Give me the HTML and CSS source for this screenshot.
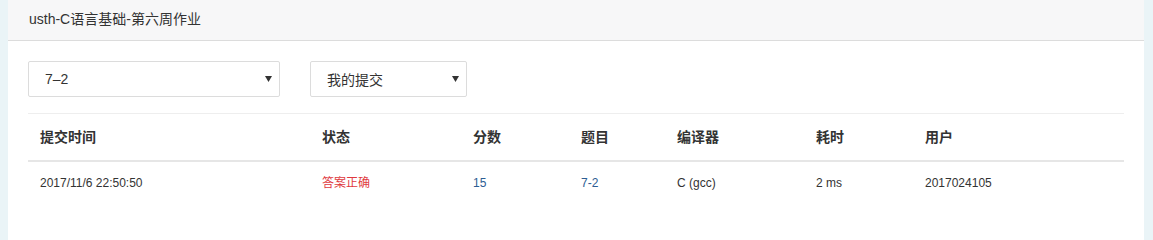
FILE: index.html
```html
<!DOCTYPE html>
<html lang="zh-CN">
<head>
<meta charset="utf-8">
<title>usth-C语言基础-第六周作业</title>
<link rel="stylesheet" href="styles.css">
</head>
<body>
<div class="card">
  <div class="card-header">usth-C语言基础-第六周作业</div>
  <div class="card-body">
    <div class="filters">
      <div class="select select-problem">
        <span class="select-text">7–2</span>
        <svg class="caret" width="7" height="6" viewBox="0 0 7 6"><path d="M0 0H7L3.5 6Z" fill="#333"/></svg>
      </div>
      <div class="select select-scope">
        <span class="select-text">我的提交</span>
        <svg class="caret" width="7" height="6" viewBox="0 0 7 6"><path d="M0 0H7L3.5 6Z" fill="#333"/></svg>
      </div>
    </div>
    <table class="table">
      <colgroup>
        <col class="c1"><col class="c2"><col class="c3"><col class="c4"><col class="c5"><col class="c6"><col>
      </colgroup>
      <thead>
        <tr><th>提交时间</th><th>状态</th><th>分数</th><th>题目</th><th>编译器</th><th>耗时</th><th>用户</th></tr>
      </thead>
      <tbody>
        <tr>
          <td>2017/11/6 22:50:50</td>
          <td class="status-ok">答案正确</td>
          <td class="link">15</td>
          <td class="link">7-2</td>
          <td>C (gcc)</td>
          <td>2 ms</td>
          <td>2017024105</td>
        </tr>
      </tbody>
    </table>
  </div>
</div>
</body>
</html>
```

FILE: styles.css
```css
html {
  margin: 0;
  padding: 0;
  height: 100%;
  background: #eaf4f7;
}
body {
  margin: 0;
  background: #eaf4f7;
  padding: 0 9px 0 8px;
  font-family: "Liberation Sans", "Noto Sans CJK SC", sans-serif;
  color: #333;
  min-height: 100vh;
  box-sizing: border-box;
  display: flex;
  flex-direction: column;
}
.card {
  background: #fff;
  flex: 1 0 auto;
  min-height: 100vh;
}
.card-header {
  background: #f7f7f8;
  border-bottom: 1px solid #dcdcdc;
  height: 40px;
  line-height: 38px;
  padding-left: 21px;
  font-size: 14px;
  color: #333;
}
.card-body {
  padding: 20px 20px 0 20px;
}
.filters {
  display: flex;
  gap: 30px;
}
.select {
  height: 36px;
  box-sizing: border-box;
  border: 1px solid #dcdcdc;
  border-radius: 2px;
  display: flex;
  align-items: center;
  justify-content: space-between;
  padding: 0 7px 0 16px;
  font-size: 14px;
  color: #333;
}
.select-problem { width: 252px; }
.select-scope { width: 157px; }
.caret { display: block; }
.table {
  margin-top: 16px;
  width: 1096px;
  border-collapse: collapse;
  table-layout: fixed;
  border-top: 1px solid #eeeeee;
}
.c1 { width: 282px; }
.c2 { width: 151px; }
.c3 { width: 108px; }
.c4 { width: 96px; }
.c5 { width: 139px; }
.c6 { width: 109px; }
.table th {
  text-align: left;
  font-weight: bold;
  font-size: 14px;
  line-height: 20px;
  padding: 13px 12px;
  border-bottom: 2px solid #e6e6e6;
  color: #333;
}
.table td {
  text-align: left;
  font-size: 12px;
  line-height: 20px;
  padding: 11px 12px;
  border-top: 1px solid #f4f4f4;
  color: #333;
}
.table td.status-ok { color: #e0393e; }
.table td.link { color: #2d5d93; }
```
